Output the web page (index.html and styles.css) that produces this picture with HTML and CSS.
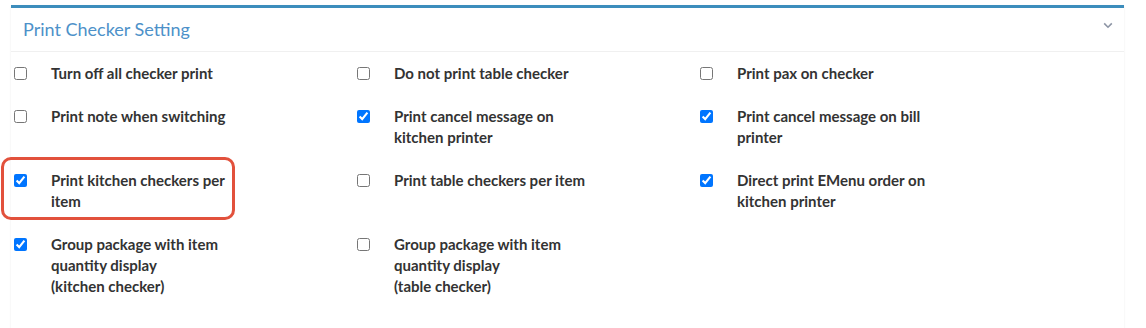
FILE: index.html
```html
<!DOCTYPE html>
<html lang="en">
<head>
    <meta charset="UTF-8">
    <meta name="viewport" content="width=device-width, initial-scale=1.0">
    <title>Print Checker Setting</title>
    <link rel="stylesheet" href="styles.css">
</head>
<body>
    <div class="box">
        <div class="box-header">
            <h3 class="box-title">Print Checker Setting</h3>
            <button class="box-tool" type="button">
                <svg width="10" height="7" viewBox="0 0 10 7"><path d="M1.2 1.4 L5 5.2 L8.8 1.4" fill="none" stroke="#8d95a5" stroke-width="1.6"/></svg>
            </button>
        </div>
        <div class="box-body">
            <div class="options">
                <label class="option"><input type="checkbox"><span>Turn off all checker print</span></label>
                <label class="option"><input type="checkbox"><span>Do not print table checker</span></label>
                <label class="option"><input type="checkbox"><span>Print pax on checker</span></label>

                <label class="option"><input type="checkbox"><span>Print note when switching</span></label>
                <label class="option"><input type="checkbox" checked><span>Print cancel message on kitchen printer</span></label>
                <label class="option"><input type="checkbox" checked><span>Print cancel message on bill printer</span></label>

                <label class="option highlighted"><input type="checkbox" checked><span>Print kitchen checkers per item</span></label>
                <label class="option"><input type="checkbox"><span>Print table checkers per item</span></label>
                <label class="option"><input type="checkbox" checked><span>Direct print EMenu order on kitchen printer</span></label>

                <label class="option"><input type="checkbox" checked><span>Group package with item quantity display<br>(kitchen checker)</span></label>
                <label class="option"><input type="checkbox"><span>Group package with item quantity display<br>(table checker)</span></label>
            </div>
        </div>
    </div>
</body>
</html>
```

FILE: styles.css
```css
body {
    margin: 0;
    background-color: #fff;
    font-family: "Lato", "Liberation Sans", sans-serif;
}
.box {
    margin: 5px 0 0 11px;
    width: 1113px;
    height: 320px;
    border-top: 3px solid #3c8dbc;
    background-color: #fff;
    box-shadow: 0 1px 2px rgba(0, 0, 0, 0.08);
}
.box-header {
    height: 43px;
    display: flex;
    align-items: center;
    justify-content: space-between;
    padding: 0 12px;
    border-bottom: 1px solid #f0f0f0;
}
.box-title {
    margin: -2px 0 0 0;
    font-size: 18px;
    font-weight: normal;
    color: #4d91c9;
}
.box-tool {
    border: none;
    background: none;
    padding: 0;
    margin: -10px -1px 0 0;
    cursor: pointer;
}
.box-body {
    padding: 11px 0 0 3px;
}
.options {
    display: grid;
    grid-template-columns: repeat(3, 343px);
    row-gap: 22px;
}
.option {
    display: flex;
    align-items: flex-start;
    position: relative;
    font-size: 15px;
    font-weight: bold;
    line-height: 21px;
    color: #333;
}
.option input {
    margin: 4px 24px 0 0;
    width: 13px;
    height: 13px;
    flex: none;
}
.option span {
    width: 197px;
}
.highlighted::after {
    content: "";
    position: absolute;
    left: -13px;
    top: -13px;
    width: 228px;
    height: 57px;
    border: 3px solid #e2513c;
    border-radius: 10px;
    pointer-events: none;
}
```
